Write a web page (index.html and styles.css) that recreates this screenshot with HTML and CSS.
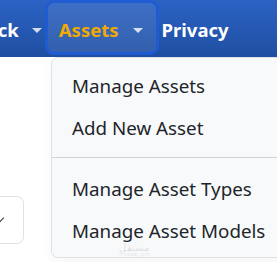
FILE: index.html
```html
<!DOCTYPE html>
<html lang="en">
<head>
    <meta charset="UTF-8">
    <meta name="viewport" content="width=device-width, initial-scale=1.0">
    <title>Assets menu</title>
    <link rel="stylesheet" href="styles.css">
</head>
<body>

    <!-- Barre de navigation -->
    <nav class="navbar">
        <a class="nav-link first" href="#">Stock <span class="caret"></span></a>
        <a class="nav-link active" href="#">Assets <span class="caret"></span></a>
        <a class="nav-link last" href="#">Privacy</a>
    </nav>

    <div class="content">
        <div class="select-box"><span class="chevron"></span></div>
    </div>

    <!-- Menu déroulant Assets -->
    <div class="dropdown-menu">
        <a class="dropdown-item" href="#">Manage Assets</a>
        <a class="dropdown-item" href="#">Add New Asset</a>
        <div class="dropdown-divider"></div>
        <a class="dropdown-item" href="#">Manage Asset Types</a>
        <a class="dropdown-item" href="#">Manage Asset Models</a>
        <div class="watermark">مستقل<small>mostaql.com</small></div>
    </div>

</body>
</html>
```
FILE: styles.css
```css
body {
    font-family: "Noto Sans", "Liberation Sans", sans-serif;
    background-color: #ffffff;
    margin: 0;
    overflow: hidden;
}

.navbar {
    height: 57px;
    display: flex;
    align-items: flex-start;
    background: linear-gradient(to bottom, #2b62c4, #1f4fa2);
}

.nav-link {
    display: flex;
    align-items: center;
    gap: 13px;
    color: #ffffff;
    font-weight: bold;
    font-size: 18.5px;
    text-decoration: none;
    height: 55px;
    box-sizing: border-box;
    padding: 3px 12px 0;
    border: 3px solid transparent;
    border-radius: 9px;
    flex-shrink: 0;
}

.nav-link.first {
    margin-left: -47px;
    padding-right: 0;
}

.nav-link.active {
    color: #f2a900;
    background-color: rgba(255, 255, 255, 0.09);
    border-color: #1f5cd2;
    padding-left: 11px;
    padding-right: 13px;
    gap: 14px;
}

.nav-link.last {
    padding-left: 0;
}

.caret {
    width: 0;
    height: 0;
    border-left: 5px solid transparent;
    border-right: 5px solid transparent;
    border-top: 5px solid rgba(255, 255, 255, 0.8);
    margin-top: 2px;
}

.content {
    padding-top: 139px;
}

.select-box {
    width: 40px;
    height: 46px;
    margin-left: -18px;
    border: 1px solid #dee2e6;
    border-radius: 7px;
    position: relative;
}

.chevron {
    position: absolute;
    left: 14px;
    top: 18px;
    width: 5px;
    height: 5px;
    border-right: 1.5px solid #343a40;
    border-bottom: 1.5px solid #343a40;
    transform: rotate(45deg);
}

.dropdown-menu {
    position: absolute;
    left: 51px;
    top: 57px;
    width: 250px;
    padding: 7px 0 5px;
    background-color: #f8f9fb;
    border: 1px solid #dee2e6;
    border-radius: 7px;
    box-shadow: 0 4px 14px rgba(0, 0, 0, 0.04);
}

.dropdown-item {
    display: block;
    height: 42px;
    line-height: 42px;
    padding-left: 20px;
    font-size: 18.8px;
    color: #212529;
    text-decoration: none;
    white-space: nowrap;
}

.dropdown-divider {
    margin: 8px 0 10px;
    border-top: 1px solid #d0d4d8;
}

.watermark {
    position: absolute;
    left: 67px;
    bottom: 0;
    text-align: center;
    font-size: 10px;
    line-height: 10px;
    color: rgba(0, 0, 0, 0.12);
}

.watermark small {
    display: block;
    font-size: 5px;
    line-height: 5px;
}
```
